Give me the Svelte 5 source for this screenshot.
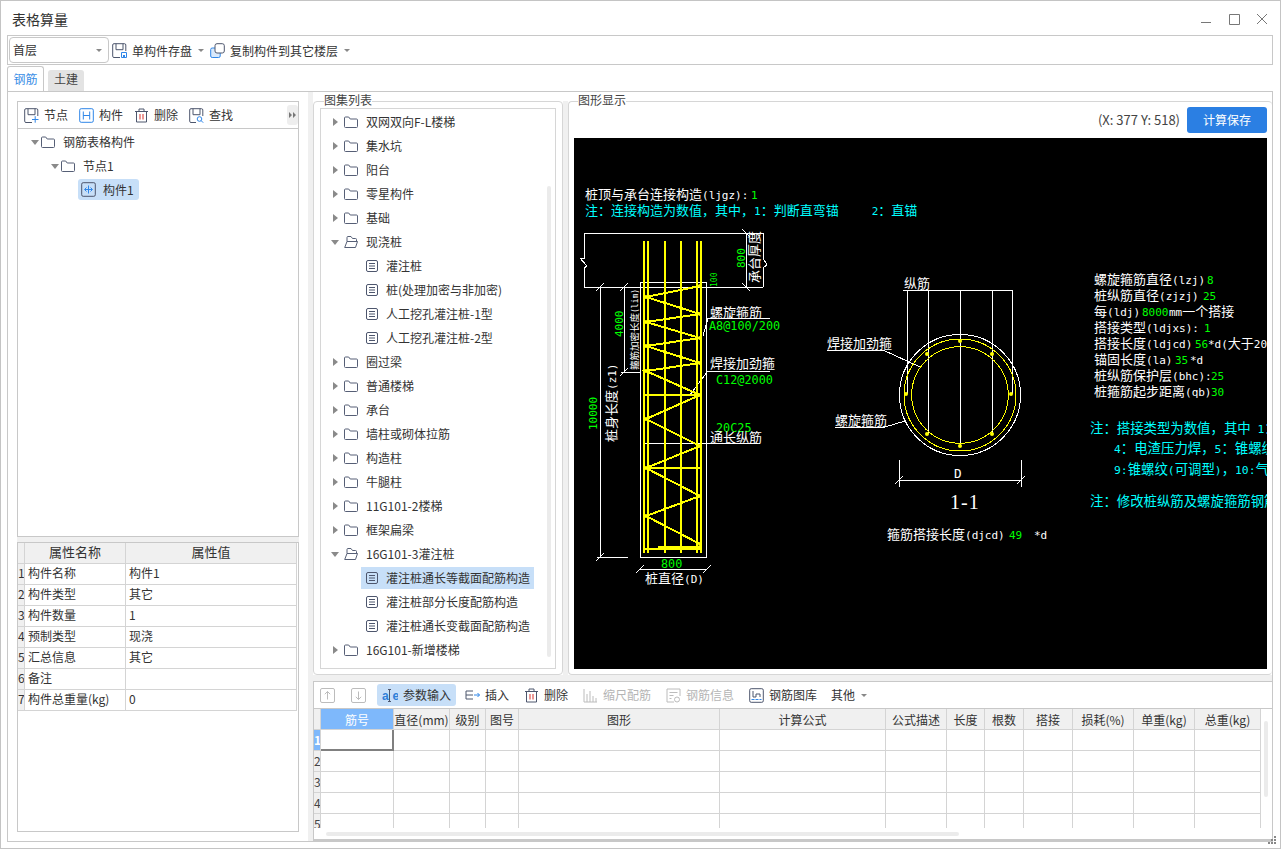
<script>
  const list = [
    { t: '双网双向F-L楼梯' }, { t: '集水坑' }, { t: '阳台' }, { t: '零星构件' }, { t: '基础' },
    { t: '现浇桩', open: true },
    { t: '灌注桩', child: true }, { t: '桩(处理加密与非加密)', child: true }, { t: '人工挖孔灌注桩-1型', child: true }, { t: '人工挖孔灌注桩-2型', child: true },
    { t: '圈过梁' }, { t: '普通楼梯' }, { t: '承台' }, { t: '墙柱或砌体拉筋' }, { t: '构造柱' }, { t: '牛腿柱' }, { t: '11G101-2楼梯' }, { t: '框架扁梁' },
    { t: '16G101-3灌注桩', open: true },
    { t: '灌注桩通长等截面配筋构造', child: true, sel: true }, { t: '灌注桩部分长度配筋构造', child: true }, { t: '灌注桩通长变截面配筋构造', child: true },
    { t: '16G101-新增楼梯' }
  ];
  const props = [['构件名称', '构件1'], ['构件类型', '其它'], ['构件数量', '1'], ['预制类型', '现浇'], ['汇总信息', '其它'], ['备注', ''], ['构件总重量(kg)', '0']];
  const cols = [
    ['', 7], ['筋号', 73], ['直径(mm)', 56], ['级别', 36], ['图号', 33], ['图形', 201], ['计算公式', 166],
    ['公式描述', 61], ['长度', 38], ['根数', 39], ['搭接', 49], ['损耗(%)', 61], ['单重(kg)', 61], ['总重(kg)', 66]
  ];
  const rows = [1, 2, 3, 4, 5];

  // ---- CAD canvas (coordinates are those of the drawing itself)
  const slash = (x, y) => `${x - 4},${y + 4} ${x + 4},${y - 4}`;
  const back = (x, y) => `${x - 4},${y - 4} ${x + 4},${y + 4}`;
  const white = [
    '584,233 763,233', '584,287 763,287',
    '584,233 584,258 580,258 587,266 584,268 584,287', '763,233 763,258 767,265 763,268 763,287',
    '746,233 746,287', back(746, 233), back(746, 287),
    '640,282 706,282 706,557 640,557 640,282',
    '600,287 600,557', slash(600, 287), slash(600, 557), '597,557 628,557',
    '624,287 624,372', slash(624, 287), slash(624, 372), '621,372 640,372', '597,287 628,287',
    '708,318 770,318', '708,318 703,336',
    '708,371 770,371', '708,371 690,395',
    '644,443 758,443',
    '640,569 707,569', slash(640, 569), slash(707, 569),
    '903,290 1012,290', '907,290 907,394', '928,290 928,434', '960,290 960,446', '992,290 992,434', '1012,290 1012,394',
    '827,350 883,350', '883,350 920,367', '835,427 885,427', '885,427 905,421',
    '899,460 899,487', '1021,460 1021,487', '899,480 1021,480', slash(899, 480), slash(1021, 480)
  ];
  const yellowBars = [644, 648, 665, 681, 697, 701];
  const zig = [[700, 286], [646, 297], [700, 314], [646, 322], [700, 338], [646, 346], [700, 363], [646, 371], [700, 395], [646, 419], [700, 446], [646, 468], [700, 496], [646, 516], [700, 544]];
  const zigPts = zig.map((p) => p.join(',')).join(' ');
  const yellowH = ['644,395 701,395', '644,468 701,468', '644,549 701,549', '658,547 700,547'];
  const bars = [[960, 341], [927, 354], [992, 354], [906, 394], [1011, 394], [927, 434], [992, 434], [960, 446]];

  const W = 'w', G = 'g', C = 'c';
  const T = (x, y, c, t, o = {}) => ({ x, y, c, t, s: 13, ...o });
  const texts = [
    T(585, 199, W, '桩顶与承台连接构造(ljgz):'), T(751, 199, G, '1'),
    T(585, 215, C, '注：连接构造为数值，其中，1：判断直弯锚     2：直锚'),
    T(745, 268, G, '800', { r: 1 }), T(759, 283, W, '承台厚度', { r: 1 }),
    T(717, 287, G, '100', { r: 1, s: 9.5 }),
    T(597, 430, G, '10000', { r: 1 }), T(616, 442, W, '桩身长度(z1)', { r: 1 }),
    T(623, 337, G, '4000', { r: 1 }), T(638, 370, W, '箍筋加密长度(lim)', { r: 1, s: 9.5 }),
    T(710, 317, W, '螺旋箍筋'), T(709, 330, G, 'A8@100/200', { s: 14 }),
    T(710, 368, W, '焊接加劲箍'), T(716, 384, G, 'C12@2000', { s: 14 }),
    T(716, 432, G, '20C25', { s: 14 }), T(710, 442, W, '通长纵筋'),
    T(661, 568, G, '800', { s: 14 }), T(645, 583, W, '桩直径(D)'),
    T(904, 288, W, '纵筋'), T(827, 348, W, '焊接加劲箍'), T(835, 425, W, '螺旋箍筋'), T(954, 478, W, 'D', { s: 15 }),
    T(887, 539, W, '箍筋搭接长度(djcd)'), T(1009, 539, G, '49'), T(1034, 539, W, '*d'),
    T(1094, 284, W, '螺旋箍筋直径(lzj)'), T(1207, 284, G, '8'),
    T(1094, 300, W, '桩纵筋直径(zjzj)'), T(1203, 300, G, '25'),
    T(1094, 316, W, '每(ldj)'), T(1142, 316, G, '8000'), T(1169, 316, W, 'mm一个搭接'),
    T(1094, 332, W, '搭接类型(ldjxs):'), T(1204, 332, G, '1'),
    T(1094, 348, W, '搭接长度(ldjcd)'), T(1195, 348, G, '56'), T(1208, 348, W, '*d(大于20d)'),
    T(1094, 364, W, '锚固长度(la)'), T(1175, 364, G, '35'), T(1190, 364, W, '*d'),
    T(1094, 380, W, '桩纵筋保护层(bhc):'), T(1211, 380, G, '25'),
    T(1094, 396, W, '桩箍筋起步距离(qb)'), T(1211, 396, G, '30'),
    T(1090, 433, C, '注：搭接类型为数值，其中 1：绑扎', { s: 13.4 }),
    T(1114, 453, C, '4：电渣压力焊，5：锥螺纹', { s: 13.4 }),
    T(1114, 474, C, '9:锥螺纹(可调型)，10:气压焊', { s: 13.4 }),
    T(1090, 506, C, '注：修改桩纵筋及螺旋箍筋钢筋', { s: 13.4 })
  ];
  const runs = (t) => t.match(/[\x00-\x7f]+|[^\x00-\x7f]+/g).map((p) => ({ p, l: p.charCodeAt(0) < 128 }));
</script>

{#snippet folder(open)}
  <svg class="folder" viewBox="0 0 14 12" width="14" height="12">
    {#if open}
      <path d="M3 5.5V1.5a1 1 0 0 1 1-1h3l1.5 2h3a1 1 0 0 1 1 1v2M.7 11.5 3 5.5h10.5l-2 6z" transform="translate(0 0)" />
    {:else}
      <path d="M.5 2a1 1 0 0 1 1-1h3.2l1.5 2h6.3a1 1 0 0 1 1 1v6.5a1 1 0 0 1-1 1h-11a1 1 0 0 1-1-1z" />
    {/if}
  </svg>
{/snippet}
{#snippet frame()}
  <path class="dk" d="M8 14.5H2a1.3 1.3 0 0 1-1.3-1.3V2A1.3 1.3 0 0 1 2 .7h10.5A1.3 1.3 0 0 1 13.8 2v6" />
  <path class="dk" d="M4 .7v6h7v-6" />
{/snippet}
{#snippet caret()}<i class="caret"></i>{/snippet}

<div class="win">
  <header class="title">
    <span>表格算量</span>
    <div class="ctrl">
      <svg width="66" height="12" viewBox="0 0 66 12"><path class="wc" d="M0 9.5h10M28.5 1.5h10v10h-10zM56 1l10 10M66 1 56 11" /></svg>
    </div>
  </header>

  <div class="toolbar">
    <div class="combo"><span>首层</span>{@render caret()}</div>
    <svg class="i15 ml3" viewBox="0 0 15 15">{@render frame()}<path class="bl" d="M9.5 9.5h5v5h-5z" /><path class="blf" d="M11 12h2v2h-2z" /></svg>
    <span class="lb">单构件存盘</span>{@render caret()}
    <svg class="i15 ml6" viewBox="0 0 15 15"><rect class="bl2" x=".7" y="5" width="9.5" height="9.5" rx="1.5" /><rect class="dkw" x="5" y=".7" width="9.3" height="9.3" rx="2" /></svg>
    <span class="lb">复制构件到其它楼层</span>{@render caret()}
  </div>

  <div class="tabs">
    <span class="tab on">钢筋</span>
    <span class="tab">土建</span>
  </div>

  <div class="panel">
    <aside class="left">
      <div class="box upper">
        <div class="ltb">
          <span class="it"><svg class="i15" viewBox="0 0 15 15">{@render frame()}<path class="bl" d="M8 11.5h6.5M11.2 8.2v6.5" /></svg>节点</span>
          <span class="it"><svg class="i15" viewBox="0 0 15 15"><rect class="bl" x=".7" y=".7" width="13.6" height="13.6" rx="1.5" /><path class="bl" d="M4.3 3.5v8M10.7 3.5v8M4.3 7.5h6.4" /></svg>构件</span>
          <span class="it"><svg class="i15" viewBox="0 0 15 15"><path class="dk" d="M1 3.5h13M5 3.5V1h5v2.5M2.5 3.5V14h10V3.5" /><path class="rd" d="M6 6v5.5M9 6v5.5" /></svg>删除</span>
          <span class="it"><svg class="i15" viewBox="0 0 15 15"><path class="dk" d="M7 14.5H2a1.3 1.3 0 0 1-1.3-1.3V2A1.3 1.3 0 0 1 2 .7h10.5A1.3 1.3 0 0 1 13.8 2v6M4 .7v6h7v-6" /><circle class="bl" cx="10.5" cy="11" r="2.3" /><path class="bl" d="m12.2 12.7 2 2" /></svg>查找</span>
          <span class="more"><svg width="7" height="6" viewBox="0 0 7 6"><path d="M0 0l3 3-3 3zM4 0l3 3-3 3z" /></svg></span>
        </div>
        <div class="tree">
          <div class="tr l1"><i class="down"></i>{@render folder(false)}<span>钢筋表格构件</span></div>
          <div class="tr l2"><i class="down"></i>{@render folder(false)}<span>节点1</span></div>
          <div class="leaf"><svg class="i15" viewBox="0 0 15 15"><rect class="dk" x=".7" y=".7" width="13.6" height="13.6" rx="1.5" /><path class="bl" d="M7.5 3.5v8M4 7.5h7M5.5 5.5l-2 2 2 2M9.5 5.5l2 2-2 2" /></svg><span>构件1</span></div>
        </div>
      </div>
      <div class="hband"></div>
      <div class="box lower">
        <table class="ptable">
          <thead><tr><th class="num"></th><th class="pn">属性名称</th><th>属性值</th></tr></thead>
          <tbody>
            {#each props as p, i}
              <tr><td class="num">{i + 1}</td><td>{p[0]}</td><td>{p[1]}</td></tr>
            {/each}
          </tbody>
        </table>
      </div>
    </aside>

    <div class="vband"></div>

    <main class="right">
      <div class="top">
        <section class="group g1">
          <span class="gt">图集列表</span>
          <div class="listbox">
            {#each list as r}
              {#if r.child}
                <div class="cr" class:sel={r.sel}>
                  <svg class="doc" viewBox="0 0 12 12" width="12" height="12"><rect class="dk" x=".5" y=".5" width="11" height="11" rx="1.5" /><path class="dk" d="M3 3.5h6M3 6h6M3 8.5h6" /></svg>
                  <span>{r.t}</span>
                </div>
              {:else}
                <div class="fr">
                  <span class="abox">{#if r.open}<i class="down"></i>{:else}<i class="rt"></i>{/if}</span>
                  {@render folder(r.open)}
                  <span>{r.t}</span>
                </div>
              {/if}
            {/each}
            <div class="vscroll"></div>
          </div>
        </section>
        <div class="gband"></div>
        <section class="group g2">
          <span class="gt">图形显示</span>
          <div class="info"><span class="xy">(X: 377 Y: 518)</span><button class="calc">计算保存</button></div>
          <svg class="cad" viewBox="574 138 693 531" width="693" height="531">
            <g class="lw">
              {#each white as p}<polyline points={p} />{/each}
              <circle cx="960" cy="395" r="60.5" />
            </g>
            <g class="ly">
              {#each yellowBars as x}<line class="bar" x1={x} y1="241" x2={x} y2="553" />{/each}
              {#each yellowH as p}<polyline class="bar" points={p} />{/each}
              <polyline class="bar" points={zigPts} />
              <circle cx="960" cy="395" r="56" />
              <circle cx="960" cy="395" r="48.3" />
            </g>
            {#each zig as p}<circle class="dot" cx={p[0]} cy={p[1]} r="2" />{/each}
            {#each bars as p}<circle class="dot" cx={p[0]} cy={p[1]} r="2" />{/each}
            {#each texts as t}
              <text x={t.x} y={t.y} class={t.c} font-size={t.s} transform={t.r ? `rotate(-90 ${t.x} ${t.y})` : undefined}>{#each runs(t.t) as u}<tspan class={u.l ? 'lat' : 'cjk'}>{u.p}</tspan>{/each}</text>
            {/each}
            <text x="950" y="509" class="w one">1-1</text>
          </svg>
        </section>
      </div>
      <div class="hband2"></div>
      <section class="bottom">
        <div class="btb">
          <svg class="i15 first" viewBox="0 0 15 15"><rect class="gy" x=".5" y=".5" width="14" height="14" rx="1.5" /><path class="gy" d="M7.5 11.5v-8M4.8 6.2l2.7-2.7 2.7 2.7" /></svg>
          <svg class="i15 m16" viewBox="0 0 15 15"><rect class="gy" x=".5" y=".5" width="14" height="14" rx="1.5" /><path class="gy" d="M7.5 3.5v8M4.8 8.8l2.7 2.7 2.7-2.7" /></svg>
          <span class="param">
            <svg width="16" height="15" viewBox="0 0 16 15"><text x="0" y="11.5" class="ae">a</text><text x="10.5" y="11.5" class="ae">e</text><path class="dk" d="M6 1.5h3M6 13.5h3M7.5 1.5v12" /></svg>
            参数输入
          </span>
          <span class="it2 m9"><svg class="i15" viewBox="0 0 15 15"><path class="dk" d="M8 3H1v8h7M1 7h7" /><path class="bl" d="M9 7h5.5M12.5 5l2 2-2 2" /></svg>插入</span>
          <span class="it2"><svg class="i15" viewBox="0 0 15 15"><path class="dk" d="M1 3.5h13M5 3.5V1h5v2.5M2.5 3.5V14h10V3.5" /><path class="rd" d="M6 6v5.5M9 6v5.5" /></svg>删除</span>
          <span class="it2 off"><svg class="i15" viewBox="0 0 15 15"><path class="gy" d="M1 1v13M4 6v8M7 3v11M10 8v6M13 10v4M1 14h13" /></svg>缩尺配筋</span>
          <span class="it2 off"><svg class="i15" viewBox="0 0 15 15"><path class="gy" d="M8 14H1V1h13v7M3.5 4.5h8M3.5 7.5h4M3.5 10.5h2" /><circle class="gy" cx="11" cy="11.5" r="2.5" /></svg>钢筋信息</span>
          <span class="it2"><svg class="i15" viewBox="0 0 15 15"><rect class="dk" x=".7" y=".7" width="13.6" height="13.6" rx="1.5" /><path class="dk" d="M4 3v6h3V6h4v3" /><path class="bl" d="M2.5 11.5h3M6.5 11.5h3M10.5 11.5h2" /></svg>钢筋图库</span>
          <span class="oth">其他</span>{@render caret()}
        </div>
        <div class="gridwrap">
          <table class="grid">
            <colgroup>{#each cols as c}<col style="width:{c[1]}px" />{/each}</colgroup>
            <thead>
              <tr>{#each cols as c, i}<th class:hot={i === 1} class:clip={i === 2}>{c[0]}</th>{/each}</tr>
            </thead>
            <tbody>
              {#each rows as r}
                <tr>
                  <td class="rn" class:hot={r === 1}>{r}</td>
                  {#each cols.slice(1) as c, i}<td class:cur={r === 1 && i === 0}></td>{/each}
                </tr>
              {/each}
            </tbody>
          </table>
          <div class="gv"></div>
        </div>
        <div class="ghwrap"><div class="gh"></div></div>
      </section>
      <svg class="grip" width="8" height="8" viewBox="0 0 8 8"><path d="M6 0h2v2H6zM3 3h2v2H3zM6 3h2v2H6zM0 6h2v2H0zM3 6h2v2H3zM6 6h2v2H6z" /></svg>
    </main>
  </div>
</div>

<style>
  :global(body) { margin: 0; background: #fff; }
  .win {
    width: 1281px; height: 849px; box-sizing: border-box; border: 1px solid #c4c4c4; padding: 0 7px 6px 6px;
    background: #fff; color: #333; overflow: hidden;
    font: 12px/16px "Noto Sans CJK SC", "Noto Sans", sans-serif;
    display: flex; flex-direction: column;
  }
  .title { height: 34px; flex: none; display: flex; align-items: center; justify-content: space-between; padding: 2px 6px 0 5px; box-sizing: border-box; font-size: 14px; }
  .ctrl { display: flex; }
  .wc { fill: none; stroke: #777; stroke-width: 1; }
  .toolbar { height: 30px; flex: none; box-sizing: border-box; border: 1px solid #c8c8c8; display: flex; align-items: center; padding-left: 1px; }
  .combo { width: 100px; height: 26px; box-sizing: border-box; border: 1px solid #c8c8c8; border-radius: 4px; display: flex; align-items: center; justify-content: space-between; padding: 0 6px 0 3px; }
  .caret { display: inline-block; width: 0; height: 0; border: 3px solid transparent; border-top: 3px solid #888; border-bottom: 0; margin-left: 6px; }
  .combo .caret { margin: 0; }
  .i15 { width: 15px; height: 15px; flex: none; }
  .ml3 { margin-left: 3px; }
  .ml6 { margin-left: 6px; }
  .lb { margin-left: 5px; padding-top: 1px; }
  .dk, .bl, .rd, .gy, .bl2, .dkw { fill: none; stroke-width: 1; }
  .dk { stroke: #4d566d; }
  .bl { stroke: #2f86e8; }
  .blf { fill: #2f86e8; }
  .rd { stroke: #d9332c; }
  .gy { stroke: #bcbcbc; }
  .bl2 { stroke: #2f86e8; fill: #d9e9fb; }
  .dkw { stroke: #4d566d; fill: #fff; }
  .tabs { height: 26px; flex: none; display: flex; align-items: flex-end; gap: 4px; }
  .tab { width: 36px; height: 21px; line-height: 18px; text-align: center; background: #e3e3e3; color: #444; border-radius: 3px 3px 0 0; }
  .tab.on { width: 37px; height: 26px; line-height: 23px; box-sizing: border-box; border: 1px solid #c8c8c8; border-bottom: 0; background: #fff; color: #3a8ee6; margin-bottom: -1px; position: relative; }
  .panel { flex: 1; min-height: 0; box-sizing: border-box; border: 1px solid #c8c8c8; display: flex; position: relative; }
  .left { width: 282px; flex: none; margin: 9px 9px 9px 9px; display: flex; flex-direction: column; }
  .box { border: 1px solid #c8c8c8; box-sizing: border-box; }
  .upper { height: 436px; flex: none; }
  .hband { height: 5px; flex: none; background: #f0f0f0; }
  .lower { flex: 1; min-height: 0; }
  .ltb { height: 27px; box-sizing: border-box; border-bottom: 1px solid #c8c8c8; display: flex; align-items: center; gap: 11px; padding-left: 6px; position: relative; }
  .it { display: flex; align-items: center; gap: 5px; }
  .more { position: absolute; right: 0; top: 3px; width: 11px; height: 20px; background: #eee; border-radius: 3px; display: flex; align-items: center; justify-content: center; }
  .more path { fill: #777; }
  .tree { padding-top: 1px; }
  .tr { height: 24px; display: flex; align-items: center; }
  .tr.l1 { padding-left: 13px; }
  .tr.l2 { padding-left: 33px; }
  .tr i { margin-right: 2px; }
  .tr span { margin-left: 8px; }
  .down { display: inline-block; width: 0; height: 0; border: 4px solid transparent; border-top: 5px solid #8a8a8a; border-bottom: 0; }
  .rt { display: inline-block; width: 0; height: 0; border: 4px solid transparent; border-left: 5px solid #8a8a8a; border-right: 0; }
  .folder { flex: none; }
  .folder path { fill: none; stroke: #565f76; stroke-width: 1; }
  .leaf { margin: 1px 0 0 60px; width: 61px; height: 21px; box-sizing: border-box; padding-left: 3px; background: #c7dff8; border-radius: 3px; display: flex; align-items: center; gap: 7px; }

  .ptable, .grid { border-collapse: separate; border-spacing: 0; table-layout: fixed; }
  .ptable { width: 279px; }
  .ptable th, .ptable td { height: 21px; padding: 0 3px 2px; box-sizing: border-box; border-right: 1px solid #d4d4d4; border-bottom: 1px solid #d4d4d4; text-align: left; font-weight: 400; white-space: nowrap; overflow: hidden; }
  .ptable th { background: #f0f0f0; text-align: center; font-size: 13px; }
  .ptable .num { width: 7px; padding: 0 0 2px; background: #f0f0f0; text-align: center; }
  .ptable .pn { width: 101px; }

  .vband { width: 5px; flex: none; background: #f0f0f0; }
  .right { flex: 1; min-width: 0; display: flex; flex-direction: column; }
  .top { height: 583px; flex: none; padding-top: 9px; box-sizing: border-box; display: flex; }
  .group { border: 1px solid #d6d6d6; border-radius: 4px; box-sizing: border-box; position: relative; height: 574px; }
  .gt { position: absolute; left: 10px; top: -10px; background: #fff; line-height: 16px; color: #444; }
  .g2 .gt { left: 9px; }
  .g1 { width: 250px; flex: none; padding: 6px 6px 5px; }
  .gband { width: 5px; flex: none; background: #f0f0f0; }
  .g2 { flex: 1; min-width: 0; padding: 5px 0 0 5px; border-right: 0; }
  .listbox { border: 1px solid #d6d6d6; height: 561px; box-sizing: border-box; padding-top: 1px; overflow: hidden; position: relative; display: flex; flex-direction: column; }
  .fr { height: 24px; flex: none; display: flex; align-items: center; padding-left: 12px; }
  .abox { width: 11px; flex: none; display: flex; align-items: center; }
  .abox .down { margin-left: -2px; }
  .fr .folder { margin-right: 8px; }
  .cr { height: 22px; flex: none; margin: 1px 0 1px 40px; width: 173px; box-sizing: border-box; padding-left: 5px; display: flex; align-items: center; gap: 8px; white-space: nowrap; }
  .cr.sel { background: #c7dff8; }
  .doc { flex: none; }
  .vscroll { position: absolute; left: 226px; top: 77px; width: 4px; height: 471px; background: #ebebeb; border-radius: 2px; }
  .info { height: 26px; display: flex; justify-content: flex-end; align-items: center; padding-right: 5px; margin-bottom: 5px; }
  .xy { margin-right: 7px; color: #444; font-size: 13px; }
  .calc { width: 80px; height: 26px; border: 0; border-radius: 3px; background: #2b7fe3; color: #fff; font: inherit; padding: 0; }
  .cad { display: block; background: #000; }
  .lw polyline, .lw circle { fill: none; stroke: #fff; stroke-width: 1; shape-rendering: crispEdges; }
  .ly circle { fill: none; stroke: #ff0; stroke-width: 1; shape-rendering: crispEdges; }
  .ly .bar { fill: none; stroke: #ff0; stroke-width: 2; shape-rendering: crispEdges; }
  .dot { fill: #ff0; }
  .cad text { white-space: pre; }
  .w { fill: #fff; }
  .g { fill: #0f0; }
  .c { fill: #0ff; }
  .cjk { font-family: "Noto Sans CJK SC", sans-serif; }
  .lat { font-family: "DejaVu Sans Mono", monospace; font-size: .846em; }
  .one { font: 20px "Liberation Serif", serif; letter-spacing: 1px; }

  .hband2 { height: 6px; flex: none; background: #f0f0f0; }
  .bottom { flex: 1; min-height: 0; box-sizing: border-box; border-left: 1px solid #c8c8c8; border-bottom: 2px solid #c8c8c8; border-top: 1px solid #c8c8c8; }
  .btb { height: 27px; box-sizing: border-box; display: flex; align-items: center; border-bottom: 1px solid #c8c8c8; }
  .first { margin-left: 6px; }
  .m16 { margin-left: 16px; }
  .param { margin-left: 11px; width: 79px; height: 22px; box-sizing: border-box; padding-left: 5px; background: #c7dff8; border-radius: 3px; display: flex; align-items: center; gap: 5px; }
  .ae { font: 700 12px "Liberation Sans", sans-serif; fill: #2f7fd8; }
  .it2 { display: flex; align-items: center; gap: 5px; margin-left: 15px; }
  .it2.m9 { margin-left: 9px; }
  .off { color: #b5b5b5; }
  .oth { margin-left: 14px; }
  .gridwrap { height: 119px; overflow: hidden; position: relative; }
  .grid { width: 946px; }
  .grid th, .grid td { height: 21px; box-sizing: border-box; padding: 0; border-right: 1px solid #d4d4d4; border-bottom: 1px solid #d4d4d4; font-weight: 400; text-align: center; white-space: nowrap; overflow: hidden; }
  .grid th { background: #f0f0f0; padding-top: 1px; }
  .grid th.hot { background: #7eb8fb; color: #fff; }
  .grid .clip { text-overflow: clip; }
  .grid .rn { background: #f0f0f0; font-size: 12px; color: #444; overflow: hidden; }
  .grid td.hot { background: #7eb8fb; color: #fff; font-weight: 700; }
  .grid td.cur { border: 2px solid #808080; border-top: 0; border-left: 0; }
  .gv { position: absolute; left: 950px; top: 12px; width: 4px; height: 76px; background: #ebebeb; border-radius: 2px; }
  .ghwrap { padding: 4px 0 0 12px; }
  .gh { width: 633px; height: 4px; background: #ebebeb; border-radius: 2px; }
  .grip { position: absolute; right: -4px; bottom: -3px; }
  .grip path { fill: #888; }
</style>
